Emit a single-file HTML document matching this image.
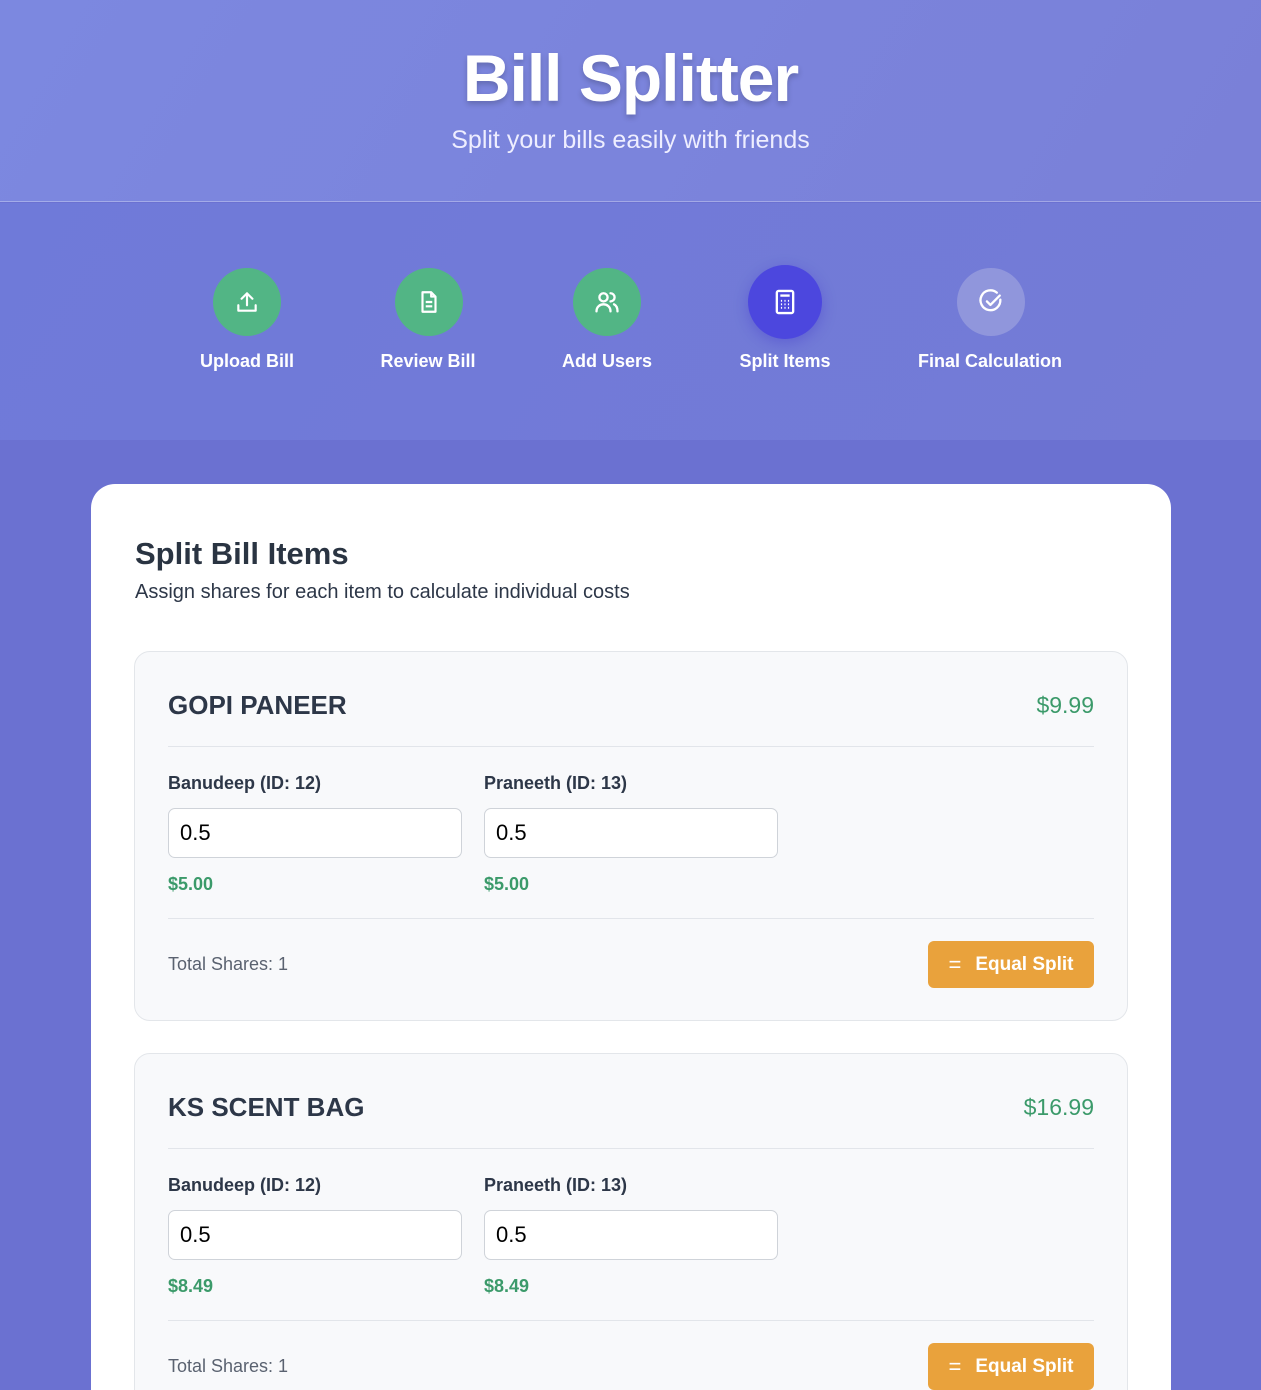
<!DOCTYPE html>
<html><head><meta charset="utf-8">
<style>
*{margin:0;padding:0;box-sizing:border-box}
html{width:1261px;height:1390px;overflow:hidden}
body{width:1261px;height:1390px;overflow:hidden;font-family:"Liberation Sans",sans-serif;background:#6b71d1;position:relative}
.hdr{position:absolute;left:0;top:0;width:1261px;height:202px;background:linear-gradient(120deg,#7c88e0,#7a80d8);border-bottom:1px solid rgba(255,255,255,.3)}
.hdr h1{position:absolute;top:40px;width:100%;text-align:center;color:#fff;font-size:66px;font-weight:bold;letter-spacing:-1px;text-shadow:0 3px 6px rgba(0,0,0,.2)}
.hdr p{position:absolute;top:126px;width:100%;text-align:center;color:#eef;font-size:25px}
.step{position:absolute;left:0;top:203px;width:1261px;height:237px;background:linear-gradient(120deg,#6f7ad9,#747bd6)}
.s{position:absolute;top:0;text-align:center;color:#fff;font-weight:bold;font-size:18px}
.c{position:absolute;width:68px;height:68px;border-radius:50%;background:#52b585;display:flex;align-items:center;justify-content:center}
.lbl{position:absolute;top:148px;white-space:nowrap;transform:translateX(-50%)}
.card{position:absolute;left:91px;top:484px;width:1080px;height:906px;background:#fff;border-radius:24px 24px 0 0;overflow:hidden}
.card h2{position:absolute;left:44px;top:52px;font-size:31px;color:#2a3442;font-weight:bold}
.card .sub{position:absolute;left:44px;top:97px;font-size:20px;color:#2d3748}
.item{position:absolute;left:43px;width:994px;height:370px;background:#f8f9fb;border:1px solid #e3e6ea;border-radius:16px}
.item .nm{position:absolute;left:33px;top:38px;font-size:26px;font-weight:bold;color:#2d3748}
.item .pr{position:absolute;right:33px;top:40px;font-size:23px;color:#3b9a6a}
.item .l1{position:absolute;left:33px;right:33px;top:94px;border-top:1px solid #e2e5ea}
.item .l2{position:absolute;left:33px;right:33px;top:266px;border-top:1px solid #e2e5ea}
.u{position:absolute;top:121px;width:294px}
.u .n{font-size:18px;color:#2d3748;font-weight:bold}
.u .in{margin-top:14px;height:50px;background:#fff;border:1px solid #cfd3d9;border-radius:7px;font-size:22px;padding:11px 11px;color:#000}
.u .a{margin-top:16px;font-size:18px;color:#3b9a6a;font-weight:bold}
.ts{position:absolute;left:33px;top:302px;font-size:18px;color:#5a6270}
.btn{position:absolute;right:33px;top:289px;width:166px;height:47px;background:#e9a23c;border-radius:6px;color:#fff;font-weight:bold;font-size:19px;display:flex;align-items:center;justify-content:center;gap:14px}
</style></head><body>
<div class="hdr"><h1>Bill Splitter</h1><p>Split your bills easily with friends</p></div>
<div class="step">
 <div class="c" style="left:213px;top:65px"><svg width="26" height="26" viewBox="0 0 24 24" fill="none" stroke="#fff" stroke-width="2" stroke-linecap="round" stroke-linejoin="round"><path d="M12 15V4M7 9l5-5 5 5M4 15v5h16v-5"/></svg></div>
 <div class="s lbl" style="left:247px">Upload Bill</div>
 <div class="c" style="left:395px;top:65px"><svg width="26" height="26" viewBox="0 0 24 24" fill="none" stroke="#fff" stroke-width="2" stroke-linejoin="round"><path d="M6 3h8l4 4v14H6z"/><path d="M14 3v4h4M9 12h6M9 16h6"/></svg></div>
 <div class="s lbl" style="left:428px">Review Bill</div>
 <div class="c" style="left:573px;top:65px"><svg width="28" height="28" viewBox="0 0 24 24" fill="none" stroke="#fff" stroke-width="2" stroke-linecap="round"><circle cx="9" cy="8" r="3.5"/><path d="M3 20c0-4 3-6 6-6s6 2 6 6M15 4.5a3.5 3.5 0 010 7M18 14c2 1 3 3 3 6"/></svg></div>
 <div class="s lbl" style="left:607px">Add Users</div>
 <div class="c" style="left:748px;top:62px;width:74px;height:74px;background:#4c47de;box-shadow:0 4px 14px rgba(60,50,200,.35)"><svg width="28" height="28" viewBox="0 0 24 24" fill="none" stroke="#fff" stroke-width="2"><rect x="5" y="2.5" width="14" height="19" rx="1.5"/><path d="M8 6.5h8" /><path d="M8.5 11h1M11.5 11h1M14.5 11h1M8.5 14h1M11.5 14h1M14.5 14h1M8.5 17h1M11.5 17h1M14.5 17h1" stroke-width="1.6"/></svg></div>
 <div class="s lbl" style="left:785px">Split Items</div>
 <div class="c" style="left:957px;top:65px;background:#9096dc"><svg width="28" height="28" viewBox="0 0 24 24" fill="none" stroke="#fff" stroke-width="2" stroke-linecap="round" stroke-linejoin="round"><path d="M20 10a8.5 8.5 0 11-3-6"/><path d="M8.5 11.5l3 3 8-8"/></svg></div>
 <div class="s lbl" style="left:990px">Final Calculation</div>
</div>
<div class="card">
 <h2>Split Bill Items</h2>
 <div class="sub">Assign shares for each item to calculate individual costs</div>
 <div class="item" style="top:167px">
  <div class="nm">GOPI PANEER</div><div class="pr">$9.99</div><div class="l1"></div>
  <div class="u" style="left:33px"><div class="n">Banudeep (ID: 12)</div><div class="in">0.5</div><div class="a">$5.00</div></div>
  <div class="u" style="left:349px"><div class="n">Praneeth (ID: 13)</div><div class="in">0.5</div><div class="a">$5.00</div></div>
  <div class="l2"></div><div class="ts">Total Shares: 1</div>
  <div class="btn"><span style="font-size:22px;font-weight:normal">=</span>Equal Split</div>
 </div>
 <div class="item" style="top:569px">
  <div class="nm">KS SCENT BAG</div><div class="pr">$16.99</div><div class="l1"></div>
  <div class="u" style="left:33px"><div class="n">Banudeep (ID: 12)</div><div class="in">0.5</div><div class="a">$8.49</div></div>
  <div class="u" style="left:349px"><div class="n">Praneeth (ID: 13)</div><div class="in">0.5</div><div class="a">$8.49</div></div>
  <div class="l2"></div><div class="ts">Total Shares: 1</div>
  <div class="btn"><span style="font-size:22px;font-weight:normal">=</span>Equal Split</div>
 </div>
</div>
</body></html>
